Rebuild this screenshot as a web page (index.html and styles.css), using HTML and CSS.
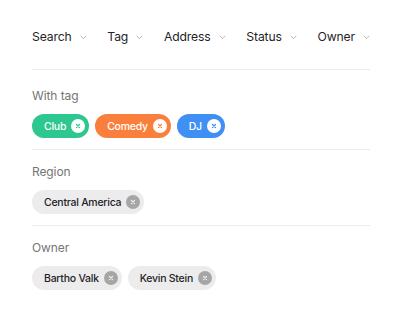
FILE: index.html
```html
<!DOCTYPE html>
<html>
<head>
<meta charset="utf-8">
<link rel="stylesheet" href="styles.css">
</head>
<body>
<div class="panel">
  <nav class="filters">
    <button class="filter">Search <svg class="chev" viewBox="0 0 10 6"><path d="M1 1l4 4 4-4"/></svg></button>
    <button class="filter">Tag <svg class="chev" viewBox="0 0 10 6"><path d="M1 1l4 4 4-4"/></svg></button>
    <button class="filter">Address <svg class="chev" viewBox="0 0 10 6"><path d="M1 1l4 4 4-4"/></svg></button>
    <button class="filter">Status <svg class="chev" viewBox="0 0 10 6"><path d="M1 1l4 4 4-4"/></svg></button>
    <button class="filter">Owner <svg class="chev" viewBox="0 0 10 6"><path d="M1 1l4 4 4-4"/></svg></button>
  </nav>
  <section class="group first">
    <div class="label">With tag</div>
    <div class="chips">
      <span class="chip green">Club <span class="x"><svg viewBox="0 0 8 8"><path d="M2.5 2.5l3 3M5.5 2.5l-3 3"/></svg></span></span>
      <span class="chip orange">Comedy <span class="x"><svg viewBox="0 0 8 8"><path d="M2.5 2.5l3 3M5.5 2.5l-3 3"/></svg></span></span>
      <span class="chip blue">DJ <span class="x"><svg viewBox="0 0 8 8"><path d="M2.5 2.5l3 3M5.5 2.5l-3 3"/></svg></span></span>
    </div>
  </section>
  <section class="group">
    <div class="label">Region</div>
    <div class="chips">
      <span class="chip gray">Central America <span class="x"><svg viewBox="0 0 8 8"><path d="M2.5 2.5l3 3M5.5 2.5l-3 3"/></svg></span></span>
    </div>
  </section>
  <section class="group last">
    <div class="label">Owner</div>
    <div class="chips">
      <span class="chip gray">Bartho Valk <span class="x"><svg viewBox="0 0 8 8"><path d="M2.5 2.5l3 3M5.5 2.5l-3 3"/></svg></span></span>
      <span class="chip gray">Kevin Stein <span class="x"><svg viewBox="0 0 8 8"><path d="M2.5 2.5l3 3M5.5 2.5l-3 3"/></svg></span></span>
    </div>
  </section>
</div>
</body>
</html>
```
FILE: styles.css
```css
html, body { margin: 0; padding: 0; background: #fff; }
body { font-family: Inter, "Noto Sans", sans-serif; color: #1f2328; }
.panel { width: 338px; margin: 0 0 0 32px; padding-top: 27px; }
.filters { display: flex; justify-content: space-between; height: 20px; align-items: center; padding-bottom: 22px; border-bottom: 1px solid #ececec; }
.filter { display: flex; align-items: center; gap: 8px; background: none; border: 0; padding: 0; font: inherit; font-size: 12.2px; letter-spacing: -0.15px; color: #1f2328; line-height: 20px; }
.chev { width: 7px; height: 4.5px; fill: none; stroke: #a0a0a0; stroke-width: 1.1; }
.group { padding: 12px 0 11px; border-bottom: 1px solid #ececec; }
.group.first { padding-top: 16px; }
.group.last { border-bottom: 0; }
.label { font-size: 12px; line-height: 20px; color: #757575; letter-spacing: -0.1px; }
.chips { display: flex; gap: 6px; margin-top: 8px; }
.chip { display: inline-flex; align-items: center; gap: 5px; height: 24px; padding: 0 4px 0 12px; border-radius: 12px; font-size: 10.5px; font-weight: 500; letter-spacing: -0.25px; }
.chip .x { width: 14px; height: 14px; border-radius: 50%; display: inline-flex; align-items: center; justify-content: center; }
.chip .x svg { width: 8px; height: 8px; fill: none; stroke-width: 1.2; stroke-linecap: round; }
.green { background: #2ec790; color: #fff; }
.orange { background: #fb7f3c; color: #fff; }
.blue { background: #3f8ff5; color: #fff; }
.green .x, .orange .x, .blue .x { background: #fff; }
.green .x svg { stroke: #2ec790; }
.orange .x svg { stroke: #fb7f3c; }
.blue .x svg { stroke: #3f8ff5; }
.gray { background: #ececec; color: #1f2328; }
.gray .x { background: #a6a6a6; }
.gray .x svg { stroke: #ececec; }
```
